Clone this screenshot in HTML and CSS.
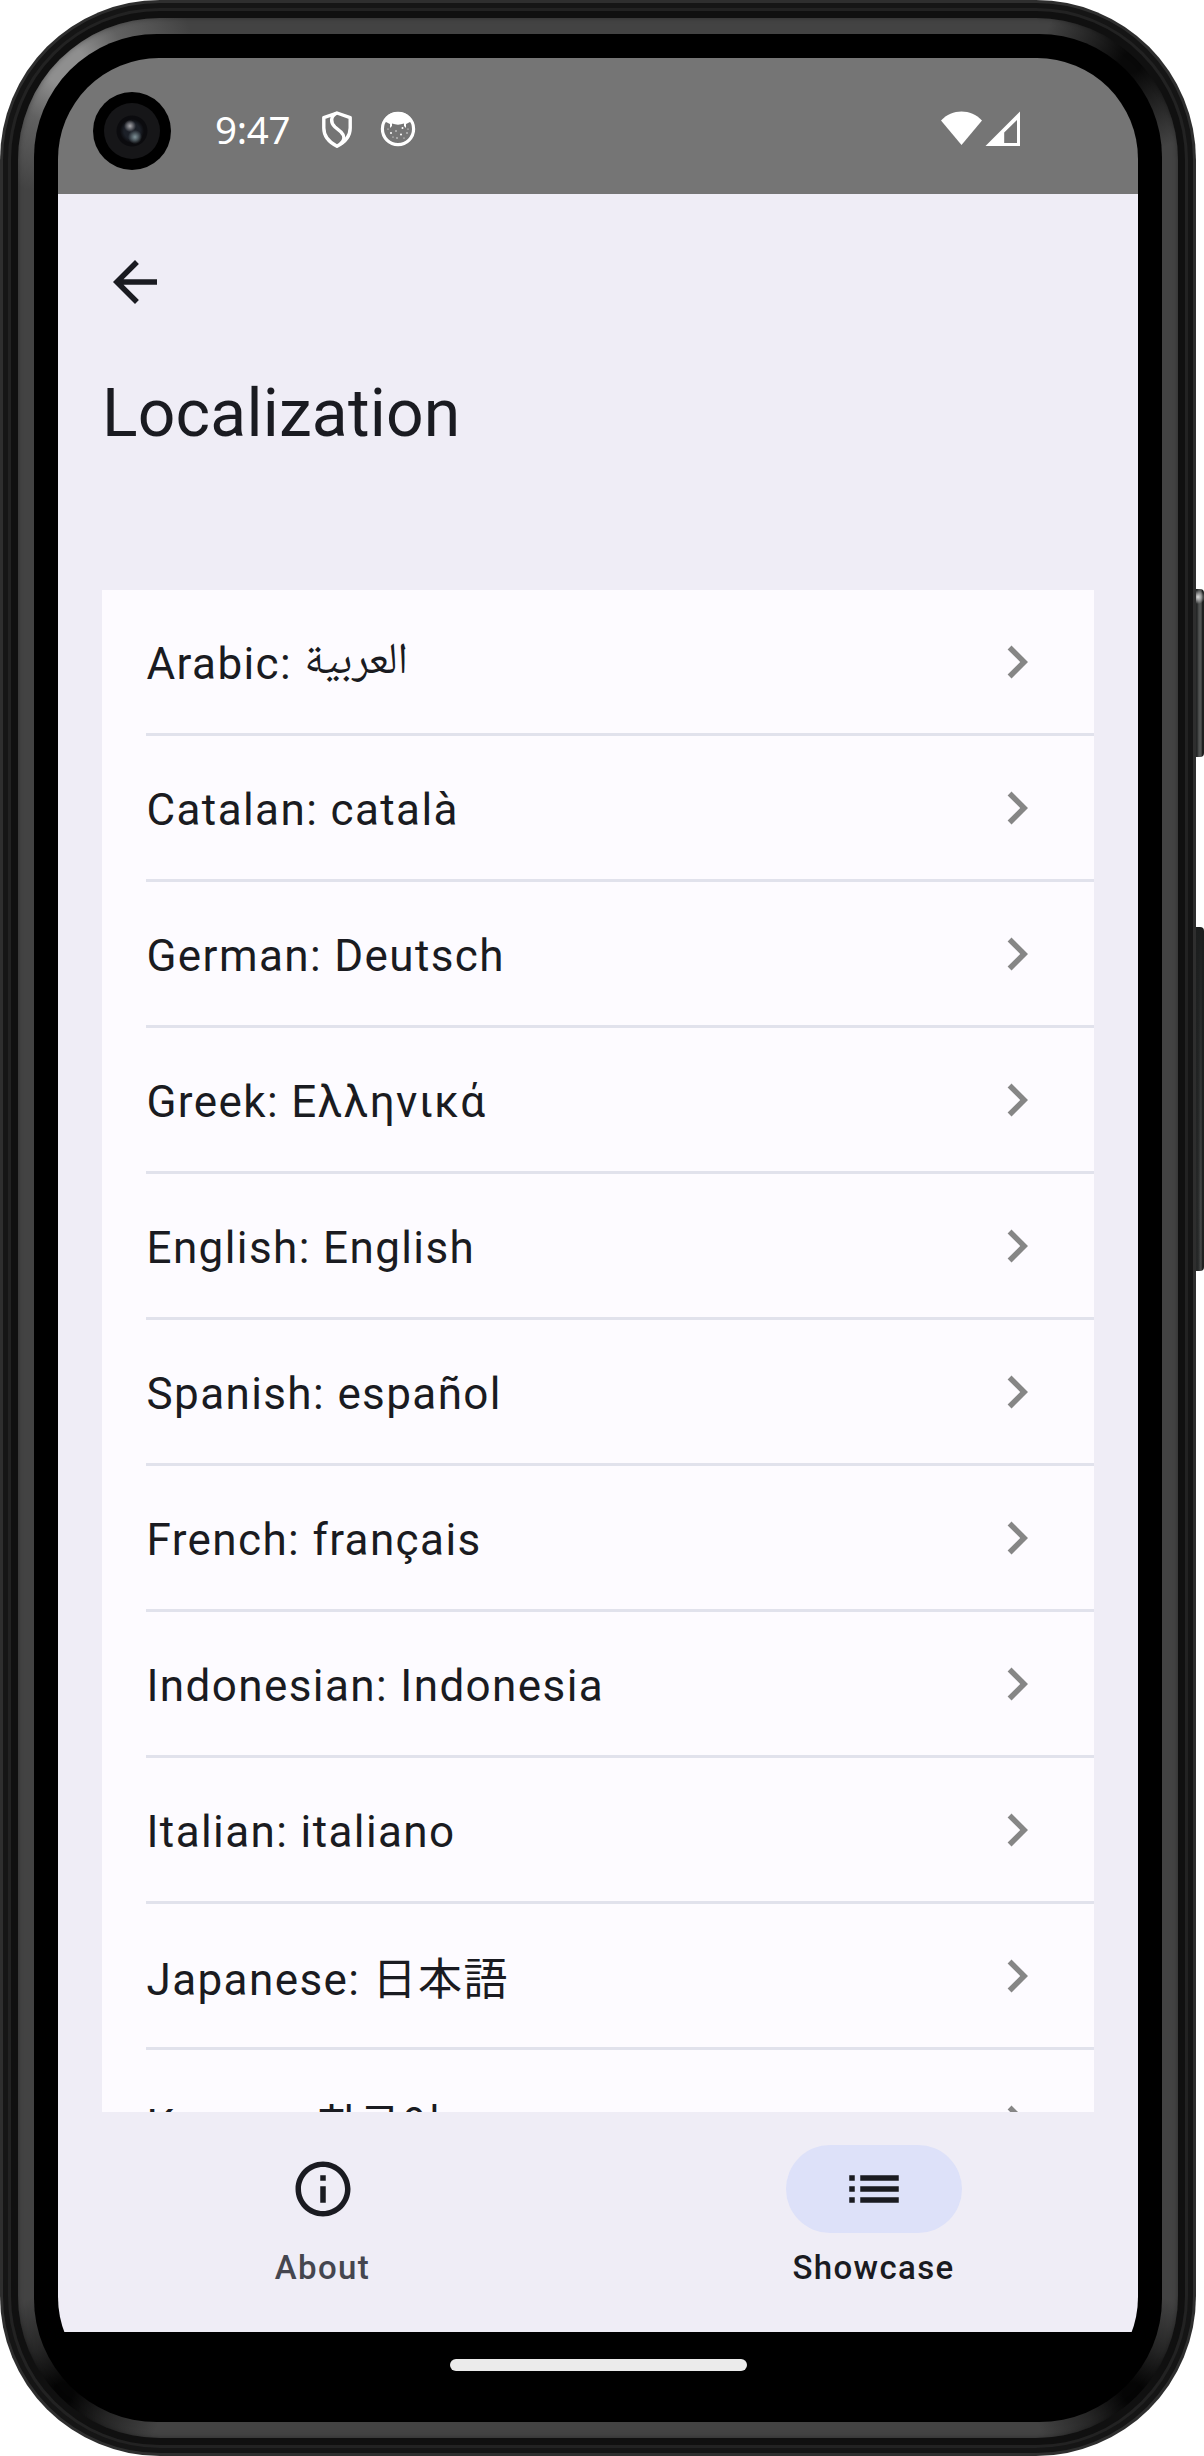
FILE: index.html
```html
<!DOCTYPE html>
<html lang="en">
<head>
<meta charset="utf-8">
<title>Localization</title>
<link rel="stylesheet" href="styles.css">
</head>
<body>
<svg class="defs" aria-hidden="true">
  <symbol id="chevron" viewBox="0 0 24 24"><path d="M10 6 8.59 7.41 13.17 12l-4.58 4.59L10 18l6-6z"/></symbol>
</svg>
<div class="phone">
  <span class="side-button power"></span>
  <span class="side-button volume"></span>
  <div class="shell"><div class="stripe"><div class="stripe-inner"><div class="rim"><div class="bezel">
    <div class="screen">
      <span class="camera"><span class="lens"></span></span>
      <header class="status">
        <span class="clock">9:47</span>
        <svg class="shield" viewBox="0 0 30 37" fill="none" stroke="#fff" stroke-width="3.4" stroke-linejoin="round"><path d="M15 2 28.2 6.6V17C28.2 25 23 31.200 15 35.200 7 31.200 1.800 25 1.800 17V6.600z"/><path d="M15 2C8 5 8.500 12 13 16L19 21C23 25 23 29 18.500 33" /></svg>
        <svg class="cat" viewBox="0 0 36 36"><circle cx="18" cy="18" r="15.600" fill="none" stroke="#fff" stroke-width="3.200"/><path fill="#fff" d="M18 1C10 1 5 6 4 10l6 3v4l2-2v-2.500c4 1.500 8 1.500 12 0V15l2 2v-4l6-3C31 6 26 1 18 1z"/><g fill="#fff"><circle cx="22.500" cy="17" r="1"/><circle cx="11" cy="22" r="1"/><circle cx="21" cy="23.500" r="1"/><circle cx="16" cy="20" r=".7"/><circle cx="17" cy="27" r=".7"/><circle cx="27" cy="22" r=".7"/><circle cx="8" cy="18" r=".6"/><circle cx="13" cy="26" r=".6"/><circle cx="24" cy="27" r=".6"/><circle cx="28" cy="18" r=".6"/></g></svg>
        <svg class="signals" viewBox="0 0 80 36" fill="#fff"><path d="M0 9.500C11-2.500 30-2.500 41 9.500L20.500 34z"/><path fill-rule="evenodd" d="M79 .5V35H44.500zM76 9 63.200 21.500V32H76z"/></svg>
      </header>
      <main class="app">
        <svg class="back" viewBox="0 0 24 24"><path d="M20 11H7.830l5.590-5.590L12 4l-8 8 8 8 1.410-1.410L7.830 13H20z"/></svg>
        <h1>Localization</h1>
        <ul class="list">
          <li><span>Arabic: <bdi class="ar">العربية</bdi></span><svg><use href="#chevron"/></svg></li>
          <li><span>Catalan: català</span><svg><use href="#chevron"/></svg></li>
          <li><span>German: Deutsch</span><svg><use href="#chevron"/></svg></li>
          <li><span>Greek: Ελληνικά</span><svg><use href="#chevron"/></svg></li>
          <li><span>English: English</span><svg><use href="#chevron"/></svg></li>
          <li><span>Spanish: español</span><svg><use href="#chevron"/></svg></li>
          <li><span>French: français</span><svg><use href="#chevron"/></svg></li>
          <li><span>Indonesian: Indonesia</span><svg><use href="#chevron"/></svg></li>
          <li><span>Italian: italiano</span><svg><use href="#chevron"/></svg></li>
          <li class="cjk"><span>Japanese: <bdi lang="ja">日本語</bdi></span><svg><use href="#chevron"/></svg></li>
          <li class="cjk"><span>Korean: <bdi lang="ko">한국어</bdi></span><svg><use href="#chevron"/></svg></li>
        </ul>
      </main>
      <nav class="tabs">
        <div class="tab"><span class="pill"><svg viewBox="0 0 24 24"><path d="M11 7h2v2h-2zm0 4h2v6h-2zm1-9C6.480 2 2 6.480 2 12s4.480 10 10 10 10-4.480 10-10S17.520 2 12 2zm0 18c-4.410 0-8-3.590-8-8s3.590-8 8-8 8 3.590 8 8-3.590 8-8 8z"/></svg></span><span class="label">About</span></div>
        <div class="tab active"><span class="pill"><svg viewBox="0 0 24 24"><path d="M3 13h2v-2H3zm0 4h2v-2H3zm0-8h2V7H3zm4 4h14v-2H7zm0 4h14v-2H7zM7 7v2h14V7z"/></svg></span><span class="label">Showcase</span></div>
      </nav>
      <footer class="gesture"><span></span></footer>
    </div>
  </div></div></div></div></div>
</div>
</body>
</html>
```
FILE: styles.css
```css
* { box-sizing: border-box; }
body { margin: 0; background: #fff; font-family: Roboto, "Noto Sans", sans-serif; color: #1a1b21; }
.defs { position: absolute; width: 0; height: 0; }
.phone { position: relative; width: 1204px; height: 2456px; padding-right: 8px; }
.side-button { position: absolute; left: 1194px; width: 10px; border-radius: 0 4px 4px 0; }
.power { top: 589px; height: 168px; background: radial-gradient(circle at 4px 8px, #ddd, rgba(120,120,120,0) 7px), linear-gradient(90deg, #252727 30%, #505251 50%, #505251 70%, #1d1e1e 85%); }
.volume { top: 927px; height: 344px; background: linear-gradient(#1c1e1e, rgba(40,42,41,.2) 80%), linear-gradient(90deg, #252727 40%, #505251 70%, #1d1e1e 85%); }

/* concentric layers of the metal frame */
.shell { position: relative; height: 100%; border-radius: 160px; padding: 3px; background: #2e2e2e; }
.stripe { height: 100%; border-radius: 157px; border: 5px solid #151515; background: #222; padding: 3px; }
.stripe-inner { height: 100%; border-radius: 149px; background: #101010; padding: 7px; }
.rim { height: 100%; border-radius: 142px; padding: 16px; box-shadow: inset 0 0 5px rgba(0,0,0,.35);
  background:
    radial-gradient(circle at 47px 47px, #8f8f8f 20px, rgba(110,110,110,.7) 60px, rgba(70,70,70,0) 130px),
    radial-gradient(circle at calc(100% - 47px) 45px, #090909 10px, rgba(30,30,30,.8) 50px, rgba(60,60,60,0) 90px),
    radial-gradient(circle at 45px calc(100% - 45px), #050505 10px, rgba(30,30,30,.8) 50px, rgba(60,60,60,0) 100px),
    radial-gradient(circle at calc(100% - 45px) calc(100% - 45px), #050505 10px, rgba(30,30,30,.8) 50px, rgba(60,60,60,0) 100px),
    #434343; }
.bezel { height: 100%; border-radius: 123px; padding: 24px; background: #000; }
.screen { position: relative; display: flex; flex-direction: column; height: 100%; border-radius: 101px; overflow: hidden; background: #000; }

.camera { position: absolute; left: 35px; top: 34px; width: 78px; height: 78px; padding: 11px; border-radius: 50%; background: #000; }
.lens { display: block; width: 56px; height: 56px; border-radius: 50%;
  background:
    radial-gradient(circle at 26px 23px, #aaa9ad, rgba(120,120,125,0) 6px),
    radial-gradient(circle at 31px 34px, #7f9298, rgba(70,85,92,0) 7px),
    radial-gradient(circle at 28px 28px, #1c2028 8px, #0b0b0e 12px, #0b0b0e 15px, #161618 16px); }

.status { display: flex; align-items: flex-start; height: 136px; flex: none; padding: 0 117px 0 157px; background: #757575; color: #fff; }
.clock { width: 106px; margin-top: 48px; font-family: "Noto Sans", sans-serif; font-size: 38.5px; line-height: 46px; letter-spacing: -.3px; }
.shield { width: 30px; height: 37px; margin: 53px 28px 0 1px; }
.cat { width: 36px; height: 36px; margin-top: 53px; }
.signals { width: 80px; height: 36px; margin: 53px 0 0 auto; }

.app { flex: 1; min-height: 0; overflow: hidden; padding: 55px 44px 0; background: #efedf6; }
.back { display: block; width: 66px; height: 66px; fill: #1a1b21; }
h1 { margin: 59px 0 0; height: 216px; font-size: 66px; font-weight: 400; line-height: 80px; letter-spacing: .2px; }
.list { margin: 0; padding: 0 0 0 44px; list-style: none; background: #fdfbff; }
.list li { display: flex; align-items: center; justify-content: space-between; height: 146px; padding-right: 44px; border-bottom: 3px solid #e1e2ec; font-size: 44px; line-height: 66px; letter-spacing: 1.4px; }
.list li > span { white-space: nowrap; padding: 5px 0 0 .5px; }
.list li svg { width: 66px; height: 66px; fill: #868686; }
.ar { letter-spacing: 0; line-height: 0; vertical-align: 6px; font-family: "Noto Naskh Arabic", "Noto Sans Arabic", "DejaVu Sans", sans-serif; }
[lang=ja] { font-family: "Noto Sans CJK JP", sans-serif; }
[lang=ko] { font-family: "Noto Sans CJK KR", sans-serif; }
.cjk bdi { line-height: 1; }
.list .cjk > span { padding-top: 9px; }

.tabs { display: flex; gap: 22px; height: 220px; flex: none; background: #efedf6; }
.tab { flex: 1; display: flex; flex-direction: column; align-items: center; padding-top: 33px; color: #45464f; }
.pill { display: flex; align-items: center; justify-content: center; width: 176px; height: 88px; border-radius: 44px; }
.pill svg { width: 66px; height: 66px; fill: #1a1b21; }
.label { margin-top: 11px; font-size: 33px; font-weight: 500; line-height: 48px; letter-spacing: 1.375px; }
.active { color: #1a1b21; }
.active .pill { background: #dde1f9; }
.gesture { display: flex; justify-content: center; height: 66px; flex: none; padding-top: 27px; background: #000; }
.gesture span { width: 297px; height: 12px; border-radius: 6px; background: #ebebeb; }
```
